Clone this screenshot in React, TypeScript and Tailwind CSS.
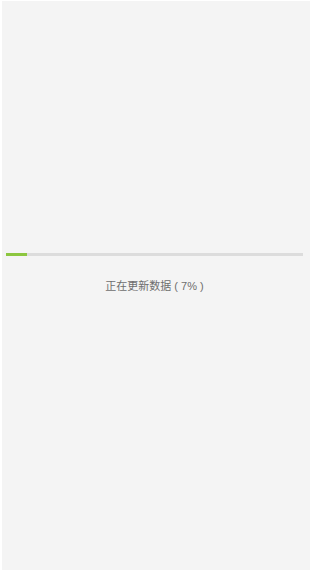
export default function App() {
  const progress = 7;
  return (
    <div className="h-[570px] w-[310px] overflow-hidden border-l-2 border-t border-white bg-[#f4f4f4] font-['Liberation_Sans','Noto_Sans_CJK_SC',sans-serif]">
      <div className="pt-[252px] pl-[4px] pr-[7px]">
        <div className="h-[3px] w-full bg-[#dcdcdc]">
          <div className="h-full bg-[#8cc63f]" style={{ width: `${progress}%` }} />
        </div>
        <p className="mt-[23px] text-center text-[11px] leading-[14px] text-[#6e6e6e]">
          正在更新数据 ( {progress}% )
        </p>
      </div>
    </div>
  );
}
